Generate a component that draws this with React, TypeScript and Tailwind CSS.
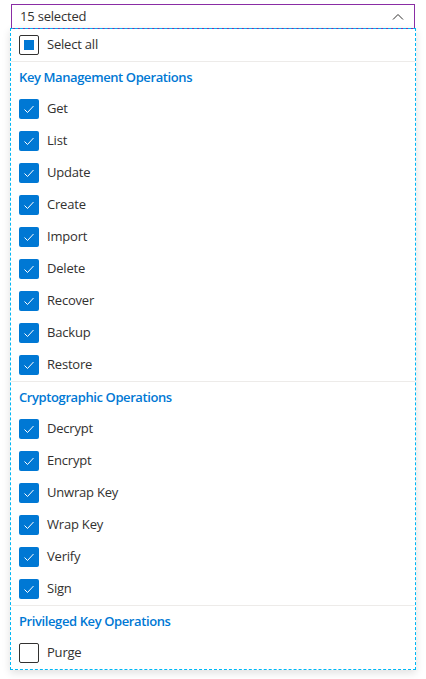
import React from "react";

type Group = { title: string; items: { label: string; checked: boolean }[] };

const GROUPS: Group[] = [
  {
    title: "Key Management Operations",
    items: ["Get", "List", "Update", "Create", "Import", "Delete", "Recover", "Backup", "Restore"].map((label) => ({
      label,
      checked: true,
    })),
  },
  {
    title: "Cryptographic Operations",
    items: ["Decrypt", "Encrypt", "Unwrap Key", "Wrap Key", "Verify", "Sign"].map((label) => ({
      label,
      checked: true,
    })),
  },
  {
    title: "Privileged Key Operations",
    items: [{ label: "Purge", checked: false }],
  },
];

function Box({ state }: { state: "checked" | "empty" | "mixed" }) {
  if (state === "checked") {
    return (
      <span className="flex h-5 w-5 shrink-0 items-center justify-center rounded-[2px] bg-[#0078d4]">
        <svg viewBox="0 0 12 12" className="h-3 w-3" fill="none" stroke="white" strokeWidth={1}>
          <path d="M1.5 6.5l3 3 6-6.5" />
        </svg>
      </span>
    );
  }
  return (
    <span className="flex h-5 w-5 shrink-0 items-center justify-center rounded-[2px] border border-[#323130] bg-white">
      {state === "mixed" && <span className="h-2.5 w-2.5 bg-[#0078d4]" />}
    </span>
  );
}

function Row({ label, state }: { label: string; state: "checked" | "empty" | "mixed" }) {
  return (
    <div className="flex h-8 items-center gap-2 px-2">
      <Box state={state} />
      <span className="text-[13px] tracking-[-0.2px] text-[#323130]">{label}</span>
    </div>
  );
}

export default function App() {
  return (
    <div className="min-h-[679px] bg-white pt-1 font-['Open_Sans',sans-serif]">
      <div className="mx-[11px] flex h-[25px] items-center justify-between border border-[#8a2da5] pl-2 pr-2.5">
        <span className="text-[13px] tracking-[-0.2px] text-[#323130]">15 selected</span>
        <svg viewBox="0 0 12 8" className="h-2 w-3" fill="none" stroke="#323130" strokeWidth={1}>
          <path d="M1 6.5L6 1.5l5 5" />
        </svg>
      </div>
      <div className="mx-[10px] -mt-px border border-dashed border-[#00b7f5] shadow-[0_3px_8px_rgba(0,0,0,0.12)]">
        <Row label="Select all" state="mixed" />
        {GROUPS.map((g) => (
          <div key={g.title} className="border-t border-[#edebe9]">
            <div className="flex h-[31px] items-center px-2 text-[13px] font-semibold tracking-[-0.4px] text-[#0078d4]">
              {g.title}
            </div>
            {g.items.map((it) => (
              <Row key={it.label} label={it.label} state={it.checked ? "checked" : "empty"} />
            ))}
          </div>
        ))}
      </div>
    </div>
  );
}
